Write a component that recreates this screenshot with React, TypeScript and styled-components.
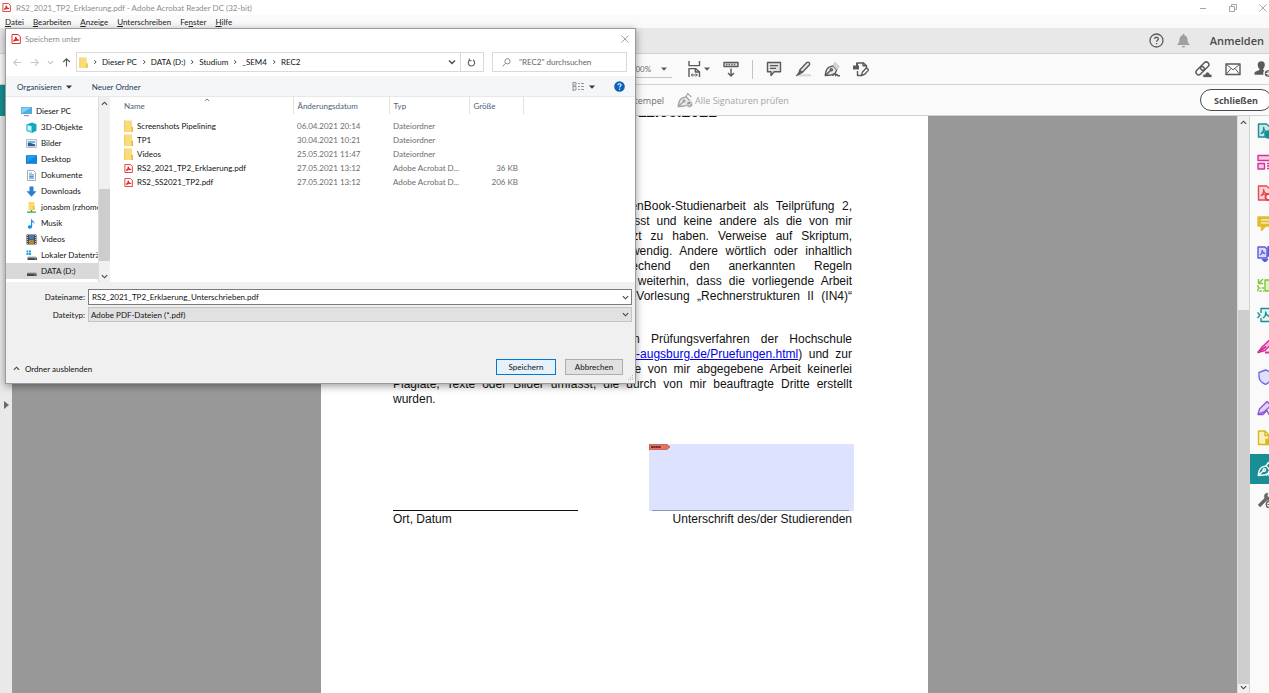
import React from "react";
import styled, { createGlobalStyle } from "styled-components";

const Global = createGlobalStyle`
  *, *::before, *::after { box-sizing: border-box; }
  html, body { margin: 0; height: 100%; overflow: hidden; }
  body { font-family: Lato, "Open Sans", sans-serif; font-size: 8px; color: #111; background: #fff; }
  button, input, select { font: inherit; color: inherit; margin: 0; }
  button { padding: 0; border: 0; background: none; }
  svg { display: block; flex: none; }
`;

/* ---------- application frame ---------- */

const Window = styled.div`
  position: relative;
  display: flex;
  flex-direction: column;
  height: 100vh;
  overflow: hidden;
`;

const TitleBar = styled.header`
  display: flex;
  align-items: center;
  gap: 5px;
  height: 15px;
  padding: 0 2px;
  color: #8d8d8d;
`;

const TitleText = styled.h1`
  flex: 1;
  margin: 0;
  font-size: 8px;
  font-weight: 400;
  white-space: nowrap;
`;

const WindowButtons = styled.div`
  display: flex;
  gap: 22px;
`;

const MenuBar = styled.nav`
  display: flex;
  align-items: center;
  gap: 9px;
  height: 13px;
  padding: 0 5px;
  background: #fafafa;
  color: #222;
`;

const MenuItem = styled.button`
  line-height: 12px;
`;

const Bar = styled.div<{ $h: number; $bg?: string }>`
  display: flex;
  align-items: center;
  height: ${(p) => p.$h}px;
  background: ${(p) => p.$bg ?? "#fafafa"};
  border-bottom: 1px solid #d2d2d2;
  color: #4b4b4b;
`;

const Spacer = styled.div`
  flex: 1;
`;

const IconRow = styled.div<{ $gap: number }>`
  display: flex;
  align-items: center;
  gap: ${(p) => p.$gap}px;
`;

const ToolbarLead = styled.div`
  flex: none;
  width: 49%;
`;

const ZoomBox = styled.div`
  display: flex;
  align-items: center;
  justify-content: space-between;
  width: 50px;
  height: 18px;
  margin-right: 14px;
  padding: 0 5px 0 9px;
  border-bottom: 1px solid #c4c4c4;
`;

const ZoomSelect = styled.select`
  appearance: none;
  border: 0;
  padding: 0;
  background: transparent;
  color: #6a6a6a;
`;

const IconButton = styled.button`
  display: flex;
  align-items: center;
  gap: 2px;
  color: #5a5a5a;
`;

const Divider = styled.div`
  width: 1px;
  height: 19px;
  background: #c4c4c4;
`;

const AccountGroup = styled.div`
  display: flex;
  align-items: center;
  gap: 13px;
  padding-right: 5px;
`;

const SignIn = styled.button`
  margin-left: 7px;
  font-family: "Open Sans", sans-serif;
  font-size: 11px;
  font-weight: 600;
  color: #4b4b4b;
`;

const ShareGroup = styled.div`
  display: flex;
  align-items: center;
  gap: 13px;
  margin-right: -3px;
`;

const StampLead = styled.div`
  flex: none;
  width: 664px;
  margin-right: 13px;
  text-align: right;
`;

const TextButton = styled.button<{ $muted?: boolean }>`
  display: inline-flex;
  align-items: center;
  gap: 2px;
  font-family: "Open Sans", sans-serif;
  font-size: 9px;
  color: ${(p) => (p.$muted ? "#a6a6a6" : "#6b6b6b")};
`;

const CloseButton = styled.button`
  width: 72px;
  height: 22px;
  margin-right: -3px;
  border: 1px solid #4b4b4b;
  border-radius: 11px;
  background: #fff;
  font-family: "Open Sans", sans-serif;
  font-size: 9px;
  font-weight: 700;
  color: #4b4b4b;
`;

const Workspace = styled.main`
  display: flex;
  flex: 1;
  min-height: 0;
`;

const NavStrip = styled.aside`
  display: flex;
  justify-content: center;
  width: 12px;
  padding-top: 285px;
  background: #e9e9e9;
`;

const DocumentView = styled.section`
  display: flex;
  flex: 1;
  justify-content: center;
  align-items: stretch;
  overflow: hidden;
  background: #989898;
`;

const Page = styled.article`
  width: 607px;
  padding: 0 76px 0 72px;
  background: #fff;
  font: 12px/15px "Liberation Sans", Arial, sans-serif;
  color: #111;
`;

const PageTitle = styled.h2`
  margin: -14px 0 77px;
  padding-right: 135px;
  font-size: 16px;
  line-height: 20px;
  text-align: right;
`;

const Paragraph = styled.p`
  margin: 0 0 28px;
`;

const Line = styled.span`
  display: block;
  white-space: nowrap;
  text-align: justify;
  text-align-last: justify;
`;

const LastLine = styled.span`
  display: block;
`;

const DocLink = styled.a`
  color: #0000e6;
`;

const Signatures = styled.div`
  display: flex;
  justify-content: space-between;
  margin-top: 37px;
`;

const DateField = styled.div`
  width: 185px;
  padding-top: 66px;
`;

const SignHere = styled.div`
  width: 203px;
`;

const FieldLine = styled.div`
  border-bottom: 1px solid #111;
`;

const SignField = styled.button`
  display: flex;
  flex-direction: column;
  justify-content: space-between;
  width: 205px;
  height: 67px;
  padding: 0 5px 0 0;
  background: #dde3ff;
`;

const SignLine = styled.span`
  align-self: stretch;
  margin-left: 3px;
  border-bottom: 1px solid #9298b4;
`;

const Caption = styled.div<{ $right?: boolean }>`
  padding-top: 1px;
  text-align: ${(p) => (p.$right ? "right" : "left")};
`;

const ScrollTrack = styled.div`
  display: flex;
  flex: none;
  flex-direction: column;
  align-items: center;
  width: 12px;
  padding: 3px 0 2px;
  background: #f0f0f0;
  border-left: 1px solid #dcdcdc;
  color: #444;
`;

const ScrollThumb = styled.div<{ $size: number }>`
  flex: ${(p) => p.$size} 0 0;
  width: 100%;
  background: #cdcdcd;
`;

const ScrollGap = styled.div<{ $size: number }>`
  flex: ${(p) => p.$size} 0 0;
`;

const ToolsPanel = styled.aside`
  flex: none;
  width: 20px;
  overflow: hidden;
  background: #fafafa;
  border-left: 1px solid #d2d2d2;
`;

const ToolList = styled.div`
  display: grid;
  grid-auto-rows: 1fr;
  height: 399px;
`;

const Tool = styled.button<{ $active?: boolean }>`
  display: flex;
  align-items: center;
  width: 32px;
  padding-left: 7px;
  background: ${(p) => (p.$active ? "#178f94" : "transparent")};
`;

/* ---------- save dialog ---------- */

const Dialog = styled.section`
  position: absolute;
  left: 5px;
  top: 28px;
  width: 631px;
  border: 1px solid #9b9b9b;
  background: #fff;
  box-shadow: 0 2px 8px rgba(0, 0, 0, 0.4);
`;

const TealTab = styled.div`
  position: absolute;
  left: 0;
  top: 85px;
  width: 5px;
  height: 31px;
  background: #178f94;
`;

const DialogTitle = styled.div`
  display: flex;
  align-items: center;
  gap: 4px;
  height: 19px;
  padding: 0 6px 0 5px;
  color: #8d8d8d;
`;

const DialogHeading = styled.h2`
  flex: 1;
  margin: 0;
  font-size: 8px;
  font-weight: 400;
`;

const AddressRow = styled.div`
  display: flex;
  align-items: center;
  height: 28px;
  padding: 0 8px 0 7px;
`;

const PathBox = styled.div`
  display: flex;
  flex: 1;
  align-items: center;
  gap: 4px;
  height: 20px;
  margin: 0 8px 0 5px;
  padding: 0 2px;
  border: 1px solid #d9d9d9;
`;

const RefreshButton = styled.button`
  display: flex;
  align-items: center;
  justify-content: center;
  width: 21px;
  height: 18px;
  border-left: 1px solid #d9d9d9;
`;

const Search = styled.label`
  display: flex;
  align-items: center;
  gap: 8px;
  width: 135px;
  height: 20px;
  padding: 0 9px;
  border: 1px solid #d9d9d9;
`;

const SearchInput = styled.input`
  width: 100px;
  border: 0;
  padding: 0;
  outline: 0;
  background: transparent;
  &::placeholder { color: #666; opacity: 1; }
`;

const CommandBar = styled.div`
  display: flex;
  align-items: center;
  gap: 20px;
  height: 21px;
  padding: 1px 10px 0 11px;
  background: #f5f6f7;
  border-bottom: 1px solid #e8e8e8;
  color: #1e395b;
`;

const Command = styled.button`
  display: flex;
  align-items: center;
  gap: 4px;
`;

const Browser = styled.div`
  display: flex;
  height: 185px;
`;

const Tree = styled.ul`
  width: 92px;
  margin: 0;
  padding: 6px 0 0;
  overflow: hidden;
  list-style: none;
`;

const TreeItem = styled.li<{ $root?: boolean; $selected?: boolean }>`
  display: flex;
  align-items: center;
  gap: 4px;
  height: 16px;
  padding-left: ${(p) => (p.$root ? 15 : 20)}px;
  background: ${(p) => (p.$selected ? "#d9d9d9" : "transparent")};
  white-space: nowrap;
`;

const Files = styled.table`
  align-self: flex-start;
  width: 413px;
  table-layout: fixed;
  border-collapse: collapse;
`;

const Th = styled.th<{ $w: number; $name?: boolean }>`
  position: relative;
  width: ${(p) => p.$w}px;
  height: 17px;
  padding: 0 0 0 ${(p) => (p.$name ? 14 : 4)}px;
  border-right: 1px solid #e2e2e2;
  font-weight: 400;
  text-align: left;
  color: #4c607a;
`;

const SortMark = styled.span`
  position: absolute;
  left: 94px;
  top: 0;
`;

const Gap = styled.tr`
  height: 5px;
`;

const Td = styled.td<{ $name?: boolean; $right?: boolean }>`
  height: 14px;
  padding: ${(p) => (p.$name ? "0 0 0 14px" : "0 5px 0 4px")};
  line-height: 14px;
  text-align: ${(p) => (p.$right ? "right" : "left")};
  color: ${(p) => (p.$name ? "#111" : "#6d6d6d")};
  white-space: nowrap;
`;

const FileName = styled.span`
  display: flex;
  align-items: center;
  gap: 4px;
`;

const DialogFooter = styled.div`
  display: flex;
  flex-direction: column;
  gap: 2px;
  padding: 7px 3px 8px 3px;
  background: #f0f0f0;
`;

const FormRow = styled.div`
  display: grid;
  grid-template-columns: 76px 1fr;
  align-items: center;
  gap: 3px;
`;

const Label = styled.label`
  text-align: right;
`;

const Combo = styled.div<{ $grey?: boolean }>`
  display: flex;
  align-items: center;
  height: ${(p) => (p.$grey ? 15 : 16)}px;
  padding-right: 2px;
  border: 1px solid ${(p) => (p.$grey ? "#c4c4c4" : "#7a7a7a")};
  background: ${(p) => (p.$grey ? "#e1e1e1" : "#fff")};
  color: #444;
`;

const NameInput = styled.input`
  flex: 1;
  height: 13px;
  border: 0;
  padding: 0 3px;
  outline: 0;
  background: transparent;
  color: #111;
`;

const TypeSelect = styled.select`
  flex: 1;
  height: 13px;
  appearance: none;
  border: 0;
  padding: 0 2px;
  outline: 0;
  background: transparent;
  color: #111;
`;

const Actions = styled.div`
  display: flex;
  align-items: center;
  gap: 9px;
  padding: 35px 9px 0 4px;
`;

const HideFolders = styled.button`
  display: flex;
  align-items: center;
  gap: 5px;
  padding-top: 3px;
`;

const PushButton = styled.button<{ $primary?: boolean }>`
  width: ${(p) => (p.$primary ? 60 : 58)}px;
  height: 16px;
  border: 1px solid ${(p) => (p.$primary ? "#0078d7" : "#adadad")};
  background: ${(p) => (p.$primary ? "#e5f1fb" : "#e1e1e1")};
`;

const Grip = styled.div`
  position: absolute;
  right: 1px;
  bottom: 1px;
`;

/* ---------- icons ---------- */

const Chevron = ({ dir = "down", size = 7, color = "#444" }: { dir?: "up" | "down" | "right"; size?: number; color?: string }) => {
  const d = dir === "down" ? "M1 2.5 4 5.5 7 2.5" : dir === "up" ? "M1 5.5 4 2.5 7 5.5" : "M3 1.5 5.5 4 3 6.5";
  return (
    <svg width={size} height={size} viewBox="0 0 8 8" fill="none" stroke={color} strokeWidth="1.3">
      <path d={d} />
    </svg>
  );
};

const Caret = ({ color = "#5a5a5a" }: { color?: string }) => (
  <svg width="6" height="4" viewBox="0 0 6 4" fill={color}>
    <path d="M0 .5h6L3 3.7z" />
  </svg>
);

const PdfIcon = ({ size = 10 }: { size?: number }) => (
  <svg width={size} height={size} viewBox="0 0 10 10">
    <path d="M1 .5h6L9.3 2.6V9.5H1z" fill="#fff" stroke="#e0302a" strokeWidth="1" />
    <path d="M2.4 7.2C4 6 5 4 4.7 2.8c.3 2.3 1.6 3.4 3.2 3.3C6 5.9 4 6.3 2.4 7.2z" fill="none" stroke="#d92a25" strokeWidth="1.2" />
  </svg>
);

const Folder = ({ w = 9, h = 12 }: { w?: number; h?: number }) => (
  <svg width={w} height={h} viewBox="0 0 9 12">
    <path d="M0 .5h8v6h1V12H0z" fill="#fbdc7b" />
    <path d="M7.3 7H9v5H7.3z" fill="#e8bd4b" />
    <path d="M0 .5h1V12H0z" fill="#f3cc62" />
  </svg>
);

const Arrow = ({ rot, color }: { rot: number; color: string }) => (
  <svg width="9" height="9" viewBox="0 0 9 9" fill="none" stroke={color} strokeWidth="1.1">
    <g transform={`rotate(${rot} 4.5 4.5)`}>
      <path d="M.8 4.5h7.6M4 1.2.8 4.5 4 7.8" />
    </g>
  </svg>
);

const treeIcons: Record<string, React.ReactNode> = {
  pc: (
    <>
      <path d="M0 1h11v7H0z" fill="#8e9aa5" />
      <path d="M.6 1.6h9.8v5.8H.6z" fill="#3fb0f0" />
      <path d="M.6 7.4 10.4 1.6H.6z" fill="#7fd0fa" />
      <path d="M3 9.2h5v1H3z" fill="#7b8a96" />
    </>
  ),
  cube: (
    <>
      <path d="M.5 2.5 6 .5l4.5 1.7v6.5L6 11 .5 9z" fill="#16a7bd" />
      <path d="M.5 2.5 6 4v7L.5 9z" fill="#5fd6e5" />
      <path d="M2 3.8 5 4.5v4L2 7.8z" fill="#d9f6fa" />
    </>
  ),
  picture: (
    <>
      <path d="M.5 1.5h10v8H.5z" fill="#f4f7fa" stroke="#a5adb5" strokeWidth=".8" />
      <path d="M1.8 3h7.4v2H1.8z" fill="#6fb8ea" />
      <path d="M1.8 5h3l4.4 1.4v1.8H1.8z" fill="#35598a" />
    </>
  ),
  desktop: (
    <>
      <path d="M0 1.2h11v8.6H0z" fill="#1273c4" />
      <path d="M.7 1.9h9.6v6.6H.7z" fill="#1f9cf0" />
      <path d="M.7 8.5 10.3 1.9v6.6z" fill="#0f86de" />
    </>
  ),
  doc: (
    <>
      <path d="M1.5.5h6l2 2v8h-8z" fill="#fff" stroke="#8d969e" strokeWidth=".8" />
      <path d="M3 3.2h3M3 4.8h5M3 8.6h5" stroke="#5b93c7" strokeWidth=".8" />
      <path d="M3.2 5.6h4.6v2H3.2z" fill="#4f94cf" />
    </>
  ),
  download: <path d="M3.5.5h4v4.8h3L5.5 10.8.5 5.3h3z" fill="#2f7fd0" />,
  netfolder: (
    <>
      <path d="M2.5 0h6v8h-6z" fill="#f8dc6a" />
      <path d="M7.3 4h1.2v4H7.3z" fill="#dfb33d" />
      <path d="M1 9.4h9v1.4H1zM4.8 8h1.5v2H4.8z" fill="#3aa54b" />
    </>
  ),
  music: <path d="M5 .2c.4 2.3 4 2.6 3.4 6-.4-1.6-1.4-2-2.2-2.2v4.6c0 2.8-4.4 2.8-4.4.5 0-1.6 1.7-2.2 3.2-1.6z" fill="#1b8fe0" />,
  film: (
    <>
      <path d="M.5.5h10v10H.5z" fill="#3d3f44" />
      <path d="M2.8 1h5.4v4.3H2.8z" fill="#4a78bd" />
      <path d="M2.8 5.8h5.4v4.2H2.8z" fill="#a9893c" />
      <path d="M1.5 1v9M9.5 1v9" stroke="#d8d8d8" strokeDasharray="1 1" strokeWidth=".9" />
    </>
  ),
  sysdrive: (
    <>
      <path d="M.5.5h2v2h-2zM3 .5h2v2H3zM.5 3h2v2h-2zM3 3h2v2H3z" fill="#16a4e6" />
      <path d="M2 6.2h7.6l1 1.6H1z" fill="#c5c9cc" />
      <path d="M1.5 7.6H11V10H1.5z" fill="#4a4d50" />
      <path d="M8.6 8.2h1.4v1H8.6z" fill="#51d06b" />
    </>
  ),
  drive: (
    <>
      <path d="M2 6h7.6l1 1.6H1z" fill="#b9bdc0" />
      <path d="M1 7.4h9.6V10H1z" fill="#44474a" />
      <path d="M8.2 8.2h1.4v1H8.2z" fill="#51d06b" />
    </>
  ),
};

const TreeIcon = ({ kind }: { kind: string }) => (
  <svg width="11" height="11" viewBox="0 0 11 11">
    {treeIcons[kind]}
  </svg>
);

const Svg16 = ({ children, size = 16, color = "#5a5a5a" }: { children: React.ReactNode; size?: number; color?: string }) => (
  <svg width={size} height={size} viewBox="0 0 16 16" fill="none" stroke={color} strokeWidth="1.4" strokeLinejoin="round">
    {children}
  </svg>
);

const FitIcon = () => (
  <Svg16>
    <path d="M3 0v4.6h10.5V0M3 16V7.6h6.6L13.5 11v5" />
    <path d="M9.3 7.8V11h4" />
    <path d="M5.3 14h6M6.8 12.5 5.3 14l1.5 1.5M9.8 12.5l1.5 1.5-1.5 1.5" strokeWidth="1" />
  </Svg16>
);

const KeyboardIcon = () => (
  <Svg16>
    <path d="M1 1.5h14v4H1z" fill="#e4e4e4" />
    <path d="M3 3.5h10" strokeDasharray="1.4 1.2" />
    <path d="M8 7.5V15M5 12l3 3 3-3" />
  </Svg16>
);

const CommentIcon = () => (
  <Svg16>
    <path d="M1.5 1.5h13v9.3H8.2L5 14.5v-3.7H1.5z" fill="#e2e2e2" />
    <path d="M4 4.6h8M4 7.4h6" />
  </Svg16>
);

const HighlightIcon = () => (
  <Svg16>
    <path d="M6 13h10v2.5H3.5z" fill="#dcdcdc" stroke="none" />
    <path d="M4.6 9.2 11.8 1.6q1.3-.9 2.3 0 1 1.2.2 2.3L7.2 11.5z" fill="#e6e6e6" />
    <path d="m4.6 9.2-1.2 2.6L1 15l4-1.6 2.2-1.9z" fill="#5a5a5a" strokeWidth=".6" />
  </Svg16>
);

const penPath = "M1.2 14.5c.5-4 1.2-7 3.8-8.3L9 4.8l3.8 3.9-1.6 3.6C9.6 14 6 14.400 1.2 14.5zM1.2 14.5 6.6 9.4";

const SignIcon = () => (
  <Svg16>
    <path d={penPath} fill="#e8e8e8" />
    <path d="m9 4.8 2-3.6 4.2 4.3-2.4 3.2" fill="#d6d6d6" strokeWidth=".8" stroke="#c4c4c4" />
    <circle cx="7.3" cy="8.8" r="1.1" />
    <path d="M8.5 14.7c2.500-3 3.600-2.600 3 0 1.200-1.600 2-1.600 2.300 0h2.200" />
  </Svg16>
);

const SharePenIcon = () => (
  <Svg16>
    <path d="M4.5 2h6l3 2.800v2M4.500 10v4.500h4" />
    <path d="M0 4.500h6v4H0zM3 1.500h2v3H3z" fill="#5a5a5a" stroke="none" />
    <path d="m8.500 14.500.8-3.200 4.200-4.500 2.200 2.100-4.200 4.500z" fill="#fafafa" />
    <path d="M10 1.500v3.300h3.500" />
  </Svg16>
);

const VerifyIcon = () => (
  <Svg16 color="#a2a2a2">
    <path d={penPath} fill="#ececec" />
    <path d="m9 4.800 1.600-3.300 3.800 3.600" strokeWidth="1.1" />
    <circle cx="7" cy="9" r="1" />
    <circle cx="12.5" cy="12.3" r="3.2" fill="#9b9b9b" stroke="#fafafa" strokeWidth=".8" />
    <path d="m10.900 12.300 1.200 1.200 2-2.300" stroke="#fff" strokeWidth="1" />
  </Svg16>
);

const LinkCloudIcon = () => (
  <Svg16 size={17}>
    <g transform="rotate(-45 7 7)">
      <rect x="-.5" y="4.5" width="9" height="5" rx="2.5" />
      <rect x="5.5" y="4.5" width="9" height="5" rx="2.5" />
    </g>
    <path d="M7.600 15.500c-1-2.600 1-3.800 2-3 .6-3 4-2.600 4.200-.2 2.300-.2 2.700 2.200 1.700 3.200z" fill="#5a5a5a" stroke="#fafafa" strokeWidth=".7" />
  </Svg16>
);

const MailIcon = () => (
  <Svg16>
    <path d="M1 3h14v10.500H1z" />
    <path d="m1 3 7 5.800L15 3M1 13.500l5-6M15 13.500l-5-6" strokeWidth="1" />
  </Svg16>
);

const AddUserIcon = () => (
  <Svg16 size={18}>
    <path d="M6.500 1c4.300 0 3.600 5 1.500 7 0 1.600 3 1.600 4.500 3V13H.5v-2C2 9.600 5 9.600 5 8 2.900 6 2.200 1 6.500 1z" fill="#5a5a5a" stroke="none" />
    <circle cx="12.5" cy="12" r="3.6" fill="#5a5a5a" stroke="#fafafa" />
    <path d="M12.500 10v4M10.500 12h4" stroke="#fff" strokeWidth="1" />
  </Svg16>
);

const HelpIcon = () => (
  <svg width="15" height="15" viewBox="0 0 15 15">
    <circle cx="7.5" cy="7.5" r="6.5" fill="none" stroke="#5c5c5c" strokeWidth="1.3" />
    <path d="M5.600 6c.1-2.400 3.900-2.300 3.800-.1 0 1.300-1.800 1.400-1.800 2.800M7.600 9.900v1.300" fill="none" stroke="#5c5c5c" strokeWidth="1.3" />
  </svg>
);

const BellIcon = () => (
  <svg width="13" height="14" viewBox="0 0 13 14" fill="#a0a0a0">
    <path d="M5.600 0h1.800v1.300C10 2 10.600 4 10.700 7c.1 1.600 1 2.200 1.800 3.200v.8H.5v-.8C1.300 9.200 2.200 8.600 2.300 7c.1-3 .7-5 3.300-5.700zM4.800 12h3.400q-.3 1.600-1.700 1.600T4.800 12z" />
  </svg>
);

/* ---------- tool panel drawings ---------- */

const pdfLoop = "M4 10.500c2-1.500 3-4 2.600-6 .2 2.600 1.500 4.200 4 4.400-2.500-.2-4.600.4-6.600 1.600z";

const tools: { name: string; color: string; body: React.ReactNode; active?: boolean }[] = [
  {
    name: "PDF erstellen", color: "#178f94",
    body: <><path d="M1.500 1h8L13 4v10H1.500z" fill="#c5e8ea" /><path d={pdfLoop} /><circle cx="11.5" cy="11.5" r="3.6" fill="#178f94" /></>,
  },
  {
    name: "Seiten verwalten", color: "#d6309b",
    body: <><path d="M1 1.500h15v5H1zM1 9.500h6.500V15H1z" fill="#f8cbe8" /><path d="M10 9.500h6M10 12h6M10 14.500h6" /></>,
  },
  {
    name: "PDF bearbeiten", color: "#e34850",
    body: <><path d="M1.500 1h8L13 4v11H1.500z" fill="#fbd3d5" /><path d={pdfLoop} /><circle cx="11.5" cy="12" r="3" fill="#fff" strokeWidth="2" /></>,
  },
  {
    name: "Kommentieren", color: "#e0bd2c",
    body: <><path d="M1 2h15v9H8.500l-4 4.500V11H1z" fill="#e0bd2c" /><path d="M4 5h12M4 8h12" stroke="#fff" strokeWidth="1" /></>,
  },
  {
    name: "Zusammenführen", color: "#5b5be0",
    body: <><path d="M1 1h7l2 2v9H1z" fill="#dadafa" /><path d="M3 9c1.500-1 2.500-3 2.200-4.500.2 2 1.300 3 3 3" /><path d="M11 0h4v10h-4zM5 13l3 3 3-3" fill="#5b5be0" /></>,
  },
  {
    name: "Seiten ordnen", color: "#7cc832",
    body: <><path d="M8 3h7v11H8z" fill="#dff3c8" /><path d="M1 8v6h6M1 11h6" strokeDasharray="2.5 1.2" /><path d="M6 2 1.500 6.500M1.500 2v4.500H6" /></>,
  },
  {
    name: "Komprimieren", color: "#178f94",
    body: <><path d="M4 6V1.500h9v13H4V11" fill="#e4f4f4" /><path d="M.5 5.500 3 8 .5 11M6 11c1.500-1 3-3.500 2.700-6 .2 2 1.300 4 4 4.300" /></>,
  },
  {
    name: "Schwärzen", color: "#d6309b",
    body: <><path d="M1 14.500 5 9l8-7.500 3 3-8 8z" fill="#f2b2dc" /><path d="m1 14.500 8-6M8 14.500h8" strokeWidth="2" /></>,
  },
  {
    name: "Schützen", color: "#6d6de8",
    body: <path d="M8.500 1 14 3v5c0 4-2.500 6-5.500 7.500C5.500 14 2 12 2 8V3.500z" fill="#dfdffb" />,
  },
  {
    name: "Ausfüllen und unterschreiben", color: "#8f55d6",
    body: <><path d="M1 14.500 2.500 9 10 1.500l4 4L7 12z" fill="#e2d0f6" /><path d="M1 14.500h5l4-4 2 4h4" /></>,
  },
  {
    name: "Zur Kommentierung senden", color: "#d8b916",
    body: <><path d="M1.500 1H8l4 4v9.500H1.500z" fill="#f9efbd" /><path d="M8 1v4.500h4" /><path d="M9 9.500h7V14H9z" fill="#d8b916" /></>,
  },
  {
    name: "Zertifikate", color: "#ffffff", active: true,
    body: <><path d={penPath} /><circle cx="7.3" cy="9" r="1.2" /><path d="m9 4.800 2.400-3.300 4 4M9 14.700c2-3 3.500-2.600 3 0h4" /></>,
  },
  {
    name: "Weitere Werkzeuge", color: "#666666",
    body: <><path d="M2 14 9 7" strokeWidth="3.2" /><path d="M14.500 3.500 12 5.500 10 4l1-2.800C8 .8 6.500 3.500 8 6.500l2.500 1.800C13 8.500 15 6.500 14.500 3.500z" fill="#666" strokeWidth=".6" /><circle cx="12.5" cy="12.5" r="3.2" fill="#fff" /><path d="M12.500 10.500v4M10.500 12.500h4" strokeWidth="1" /></>,
  },
];

/* ---------- data ---------- */

const menus = ["Datei", "Bearbeiten", "Anzeige", "Unterschreiben", "Fenster", "Hilfe"];
const path = ["Dieser PC", "DATA (D:)", "Studium", "_SEM4", "REC2"];

const tree = [
  { label: "Dieser PC", icon: "pc", root: true },
  { label: "3D-Objekte", icon: "cube" },
  { label: "Bilder", icon: "picture" },
  { label: "Desktop", icon: "desktop" },
  { label: "Dokumente", icon: "doc" },
  { label: "Downloads", icon: "download" },
  { label: "jonasbm (rzhome)", icon: "netfolder" },
  { label: "Musik", icon: "music" },
  { label: "Videos", icon: "film" },
  { label: "Lokaler Datenträger", icon: "sysdrive" },
  { label: "DATA (D:)", icon: "drive", selected: true },
];

const files = [
  { name: "Screenshots Pipelining", date: "06.04.2021 20:14", type: "Dateiordner", size: "" },
  { name: "TP1", date: "30.04.2021 10:21", type: "Dateiordner", size: "" },
  { name: "Videos", date: "25.05.2021 11:47", type: "Dateiordner", size: "" },
  { name: "RS2_2021_TP2_Erklaerung.pdf", date: "27.05.2021 13:12", type: "Adobe Acrobat D...", size: "36 KB" },
  { name: "RS2_SS2021_TP2.pdf", date: "27.05.2021 13:12", type: "Adobe Acrobat D...", size: "206 KB" },
];

const Mnemonic = ({ label }: { label: string }) => {
  const at = label === "Fenster" ? 2 : 0;
  return (
    <>
      {label.slice(0, at)}
      <u>{label[at]}</u>
      {label.slice(at + 1)}
    </>
  );
};

const SaveDialog = () => (
  <Dialog role="dialog" aria-labelledby="save-title">
    <DialogTitle>
      <PdfIcon />
      <DialogHeading id="save-title">Speichern unter</DialogHeading>
      <button aria-label="Dialog schließen">
        <svg width="8" height="8" viewBox="0 0 8 8" stroke="#a5a5a5"><path d="m.5.5 7 7m0-7-7 7" /></svg>
      </button>
    </DialogTitle>
    <AddressRow>
      <IconRow $gap={8}>
        <Arrow rot={0} color="#c8c8c8" />
        <Arrow rot={180} color="#c8c8c8" />
        <Chevron size={7} color="#c0c0c0" />
        <Arrow rot={90} color="#555" />
      </IconRow>
      <PathBox>
        <Folder w={9} h={11} />
        {path.map((p) => (
          <React.Fragment key={p}>
            <Chevron dir="right" size={6} />
            <span>{p}</span>
          </React.Fragment>
        ))}
        <Spacer />
        <Chevron size={8} />
        <RefreshButton aria-label="Aktualisieren">
          <svg width="9" height="9" viewBox="0 0 9 9" fill="none" stroke="#555" strokeWidth="1.1">
            <path d="M2.600 2.200A3.200 3.200 0 1 0 6 2M2.300.500v2.200h2.200" />
          </svg>
        </RefreshButton>
      </PathBox>
      <Search>
        <svg width="9" height="9" viewBox="0 0 9 9" fill="none" stroke="#8a8a8a">
          <circle cx="5.5" cy="3.3" r="2.6" /><path d="M3.600 5.200.500 8.500" />
        </svg>
        <SearchInput aria-label="Suchen" placeholder={'"REC2" durchsuchen'} />
      </Search>
    </AddressRow>
    <CommandBar>
      <Command>Organisieren <Caret color="#1e395b" /></Command>
      <Command>Neuer Ordner</Command>
      <Spacer />
      <IconRow $gap={19}>
        <Command aria-label="Ansicht">
          <svg width="13" height="9" viewBox="0 0 13 9" fill="none" stroke="#8b8b8b">
            <path d="M1 0v9M1 .5h3v2.500H1M1 4.500h3V8H1M6 1.500h2M9 1.500h3M6 4.500h2M9 4.500h3M6 7.500h2M9 7.500h3" strokeWidth=".9" />
          </svg>
          <Caret color="#1e395b" />
        </Command>
        <button aria-label="Hilfe">
          <svg width="11" height="11" viewBox="0 0 11 11">
            <circle cx="5.5" cy="5.5" r="5.3" fill="#0a63b8" />
            <path d="M3.900 4.200c0-2 3.200-1.900 3.200-.1 0 1.100-1.500 1.100-1.500 2.400M5.600 7.600v1.200" fill="none" stroke="#fff" strokeWidth="1.1" />
          </svg>
        </button>
      </IconRow>
    </CommandBar>
    <Browser>
      <Tree>
        {tree.map((t) => (
          <TreeItem key={t.label} $root={t.root} $selected={t.selected}>
            <TreeIcon kind={t.icon} />
            {t.label}
          </TreeItem>
        ))}
      </Tree>
      <ScrollTrack>
        <Chevron dir="up" />
        <ScrollGap $size={81} />
        <ScrollThumb $size={70} />
        <ScrollGap $size={12} />
        <Chevron />
      </ScrollTrack>
      <Files>
        <thead>
          <tr>
            <Th $w={183} $name scope="col">
              Name
              <SortMark><Chevron dir="up" size={6} color="#777" /></SortMark>
            </Th>
            <Th $w={96} scope="col">Änderungsdatum</Th>
            <Th $w={80} scope="col">Typ</Th>
            <Th $w={54} scope="col">Größe</Th>
          </tr>
        </thead>
        <tbody>
          <Gap />
          {files.map((f) => (
            <tr key={f.name}>
              <Td $name>
                <FileName>
                  {f.name.endsWith(".pdf") ? <PdfIcon size={9} /> : <Folder />}
                  {f.name}
                </FileName>
              </Td>
              <Td>{f.date}</Td>
              <Td>{f.type}</Td>
              <Td $right>{f.size}</Td>
            </tr>
          ))}
        </tbody>
      </Files>
    </Browser>
    <DialogFooter>
      <FormRow>
        <Label htmlFor="file-name">Dateiname:</Label>
        <Combo>
          <NameInput id="file-name" defaultValue="RS2_2021_TP2_Erklaerung_Unterschrieben.pdf" />
          <Chevron />
        </Combo>
      </FormRow>
      <FormRow>
        <Label htmlFor="file-type">Dateityp:</Label>
        <Combo $grey>
          <TypeSelect id="file-type">
            <option>Adobe PDF-Dateien (*.pdf)</option>
          </TypeSelect>
          <Chevron />
        </Combo>
      </FormRow>
      <Actions>
        <HideFolders><Chevron dir="up" />Ordner ausblenden</HideFolders>
        <Spacer />
        <PushButton $primary>Speichern</PushButton>
        <PushButton>Abbrechen</PushButton>
      </Actions>
    </DialogFooter>
    <Grip>
      <svg width="7" height="7" viewBox="0 0 7 7" fill="#b5b5b5">
        <path d="M5 0h1v1H5zM3 2h1v1H3zM5 2h1v1H5zM1 4h1v1H1zM3 4h1v1H3zM5 4h1v1H5z" />
      </svg>
    </Grip>
  </Dialog>
);

export default function App() {
  return (
    <Window>
      <Global />
      <TitleBar>
        <PdfIcon size={9} />
        <TitleText>RS2_2021_TP2_Erklaerung.pdf - Adobe Acrobat Reader DC (32-bit)</TitleText>
        <WindowButtons>
          <button aria-label="Minimieren"><svg width="8" height="8" stroke="#a5a5a5"><path d="M1 4.500h6" /></svg></button>
          <button aria-label="Verkleinern">
            <svg width="8" height="8" fill="none" stroke="#a5a5a5"><path d="M.5 2.500h5v5h-5zM2.500 2.500v-2h5v5h-2" /></svg>
          </button>
          <button aria-label="Schließen"><svg width="8" height="8" stroke="#a5a5a5"><path d="m.5.5 7 7m0-7-7 7" /></svg></button>
        </WindowButtons>
      </TitleBar>
      <MenuBar>
        {menus.map((m) => (
          <MenuItem key={m}><Mnemonic label={m} /></MenuItem>
        ))}
      </MenuBar>
      <Bar $h={26} $bg="#e8e8e8">
        <Spacer />
        <AccountGroup>
          <IconButton aria-label="Hilfe"><HelpIcon /></IconButton>
          <IconButton aria-label="Benachrichtigungen"><BellIcon /></IconButton>
          <SignIn>Anmelden</SignIn>
        </AccountGroup>
      </Bar>
      <Bar $h={31}>
        <ToolbarLead />
        <ZoomBox>
          <ZoomSelect aria-label="Zoom"><option>100%</option></ZoomSelect>
          <Caret />
        </ZoomBox>
        <IconRow $gap={13}>
          <IconButton aria-label="Seite anpassen"><FitIcon /><Caret /></IconButton>
          <IconButton aria-label="Tastatur"><KeyboardIcon /></IconButton>
          <Divider />
          <IconButton aria-label="Kommentar"><CommentIcon /></IconButton>
          <IconButton aria-label="Hervorheben"><HighlightIcon /></IconButton>
          <IconButton aria-label="Unterschreiben"><SignIcon /></IconButton>
          <IconButton aria-label="Senden"><SharePenIcon /></IconButton>
        </IconRow>
        <Spacer />
        <ShareGroup>
          <IconButton aria-label="Link freigeben"><LinkCloudIcon /></IconButton>
          <IconButton aria-label="E-Mail"><MailIcon /></IconButton>
          <IconButton aria-label="Personen hinzufügen"><AddUserIcon /></IconButton>
        </ShareGroup>
      </Bar>
      <Bar $h={31}>
        <StampLead><TextButton>Zeitstempel</TextButton></StampLead>
        <TextButton $muted><VerifyIcon />Alle Signaturen prüfen</TextButton>
        <Spacer />
        <CloseButton>Schließen</CloseButton>
      </Bar>
      <Workspace>
        <NavStrip>
          <svg width="5" height="8" viewBox="0 0 5 8" fill="#6b6b6b"><path d="M0 0l5 4-5 4z" /></svg>
        </NavStrip>
        <DocumentView>
          <Page>
            <PageTitle>11.06.2021</PageTitle>
            <Paragraph>
              <Line>Hiermit erkläre ich, diese vorliegende OpenBook-Studienarbeit als Teilprüfung 2,</Line>
              <Line>selbstständig und eigenverantwortlich verfasst und keine andere als die von mir</Line>
              <Line>angegebenen genannten Hilfsmittel benutzt zu haben. Verweise auf Skriptum,</Line>
              <Line>Übung und Praktikum sind unbedingt notwendig. Andere wörtlich oder inhaltlich</Line>
              <Line>entnommene Textstellen sind entsprechend den anerkannten Regeln</Line>
              <Line>damit gekennzeichnet worden. Ich erkläre weiterhin, dass die vorliegende Arbeit</Line>
              <Line>bisher nicht eigenhändig im Rahmen der Vorlesung „Rechnerstrukturen II (IN4)“</Line>
            </Paragraph>
            <Paragraph>
              <Line>Die aktuellen allgemeinen Hinweise zum Prüfungsverfahren der Hochschule</Line>
              <Line>und Wissenschaft Augsburg (<DocLink href="#pruefungen">https://www.hs-augsburg.de/Pruefungen.html</DocLink>) und zur</Line>
              <Line>Kenntnis genommen haben, sowie dass die von mir abgegebene Arbeit keinerlei</Line>
              <Line>Plagiate, Texte oder Bilder umfasst, die durch von mir beauftragte Dritte erstellt</Line>
              <LastLine>wurden.</LastLine>
            </Paragraph>
            <Signatures>
              <DateField>
                <FieldLine />
                <Caption>Ort, Datum</Caption>
              </DateField>
              <SignHere>
                <SignField aria-label="Unterschriftsfeld">
                  <svg width="22" height="6" viewBox="0 0 22 6">
                    <path d="M0 .5h18L21 3l-3 2.500H0z" fill="#e8705c" stroke="#b9402f" strokeWidth=".6" />
                    <path d="M2 3h10" stroke="#3b1510" strokeWidth="1.6" strokeDasharray="2 .4" />
                  </svg>
                  <SignLine />
                </SignField>
                <Caption $right>Unterschrift des/der Studierenden</Caption>
              </SignHere>
            </Signatures>
          </Page>
        </DocumentView>
        <ScrollTrack>
          <Chevron dir="up" />
          <ScrollGap $size={183} />
          <ScrollThumb $size={373} />
          <Chevron />
        </ScrollTrack>
        <ToolsPanel>
          <ToolList>
            {tools.map((t) => (
              <Tool key={t.name} aria-label={t.name} $active={t.active}>
                <Svg16 color={t.color}>{t.body}</Svg16>
              </Tool>
            ))}
          </ToolList>
        </ToolsPanel>
      </Workspace>
      <TealTab />
      <SaveDialog />
    </Window>
  );
}
